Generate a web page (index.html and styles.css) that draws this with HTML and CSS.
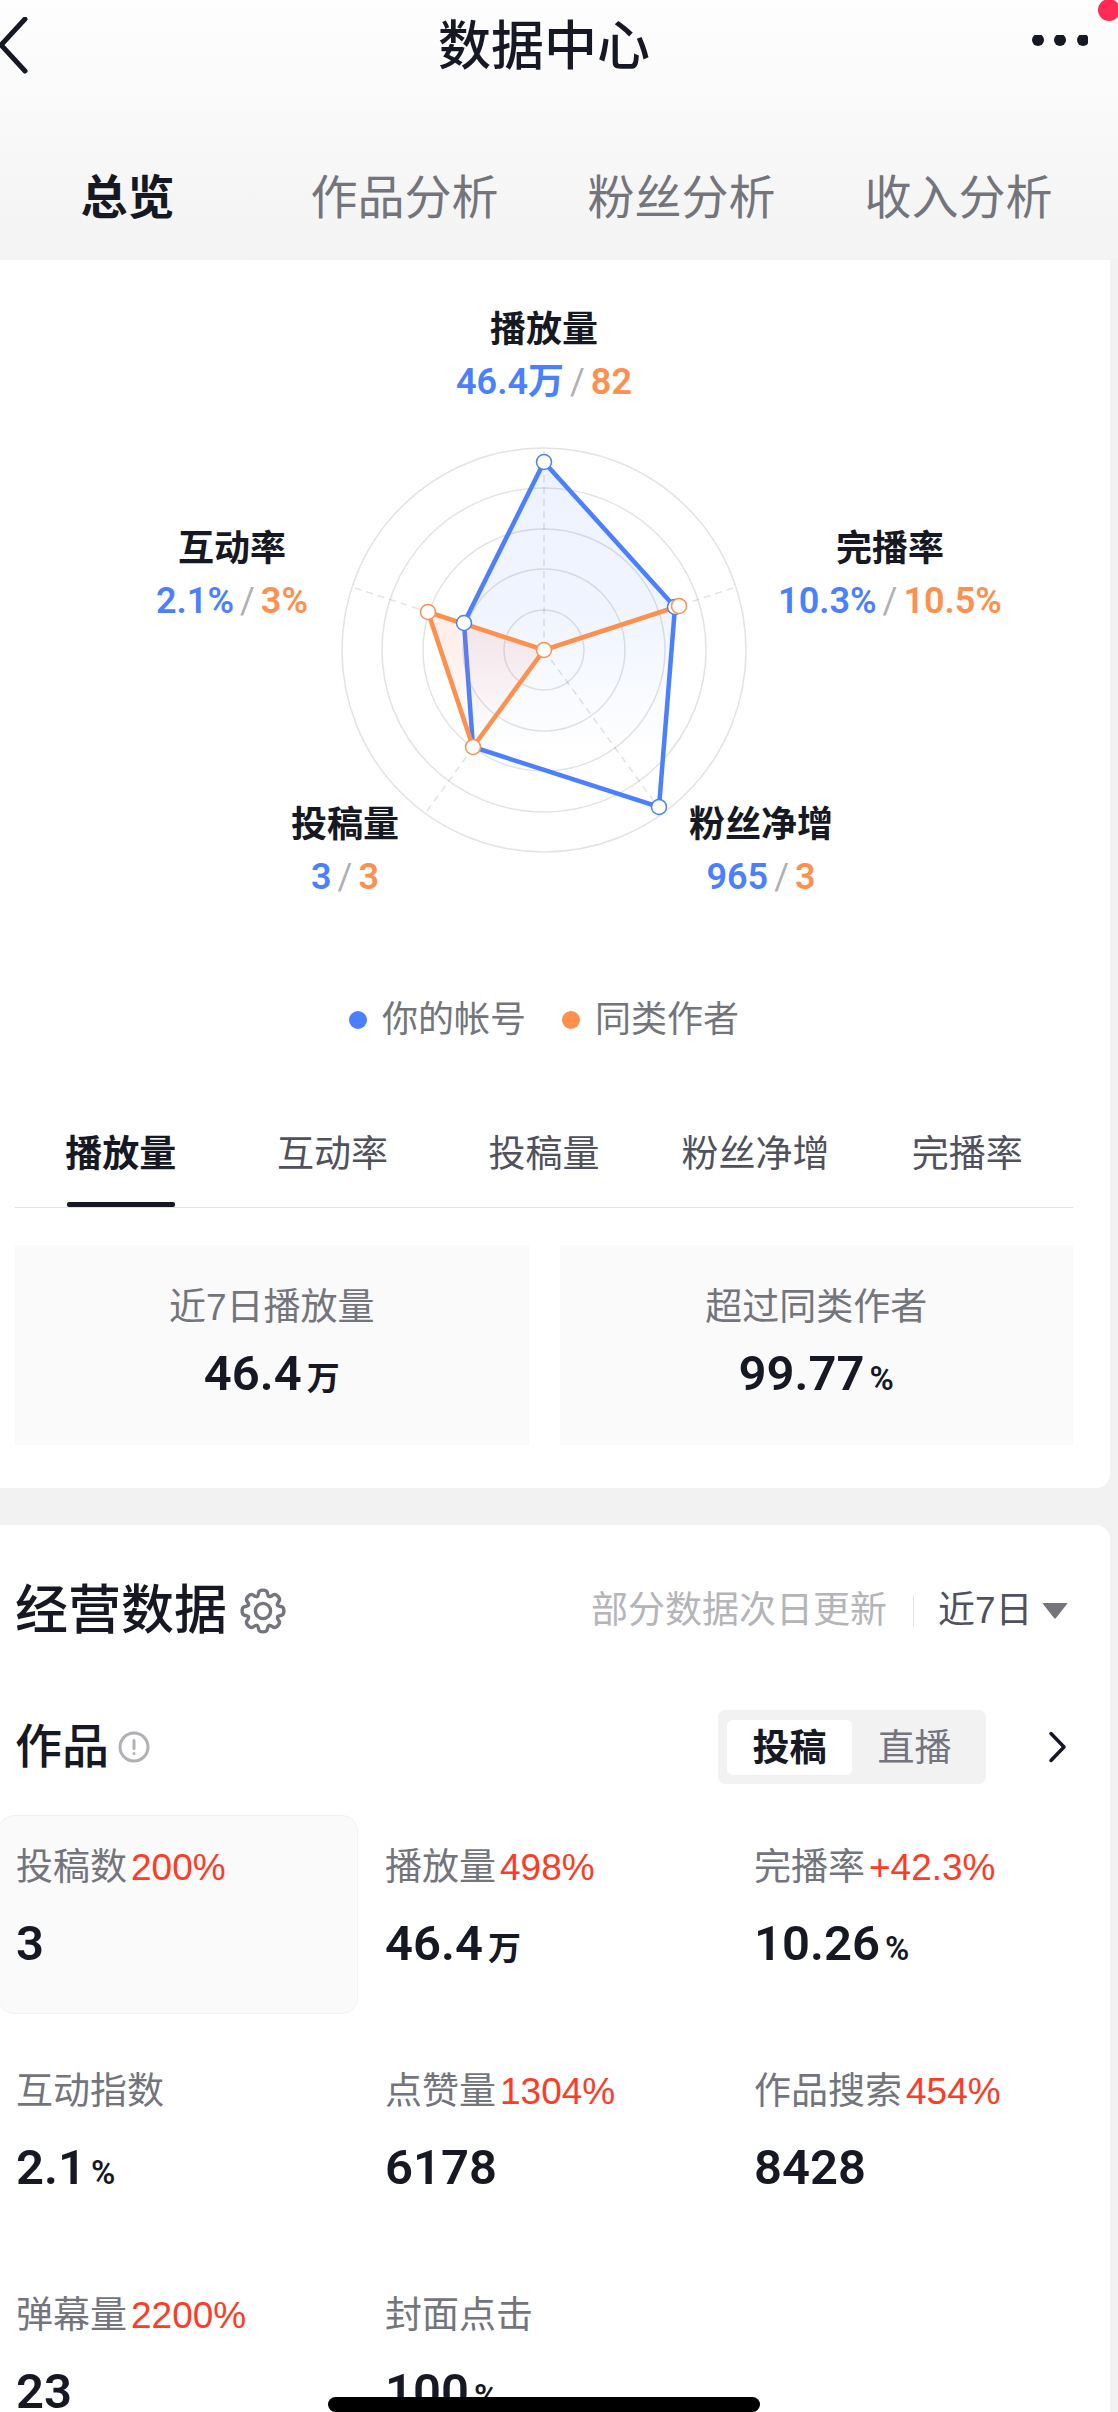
FILE: index.html
```html
<!DOCTYPE html>
<html lang="zh-CN">
<head>
  <meta charset="UTF-8"/>
  <meta name="viewport" content="width=device-width, initial-scale=1.0"/>
  <title>数据中心</title>
  <link rel="stylesheet" href="styles.css">
</head>
<body>
  <div class="page">
    <header class="header">
      <div class="topbar">
        <button class="icon-btn" type="button" aria-label="返回">
          <svg width="30" height="60" viewBox="0 0 30 60" fill="none" stroke="#161823" stroke-width="5" stroke-linecap="round" stroke-linejoin="round">
            <path d="M25 2 L1 28 L25 54"/>
          </svg>
        </button>
        <h1>数据中心</h1>
        <button class="icon-btn menu" type="button" aria-label="更多">
          <svg width="58" height="24" viewBox="0 0 58 24" fill="#161823">
            <circle cx="8" cy="5" r="6"/>
            <circle cx="30" cy="5" r="6"/>
            <circle cx="53" cy="5" r="6"/>
          </svg>
        </button>
        <span class="badge"></span>
      </div>
      <nav class="main-tabs">
        <a class="active" href="#overview">总览</a>
        <a href="#works">作品分析</a>
        <a href="#fans">粉丝分析</a>
        <a href="#income">收入分析</a>
      </nav>
    </header>

    <section class="card chart-card">
      <div class="radar">
        <svg width="780" height="600" viewBox="0 0 780 600" fill="none">
          <defs>
            <linearGradient id="blueFill" x1="0" y1="0" x2="0" y2="1">
              <stop offset="0" stop-color="#4a7fff" stop-opacity="0.1"/>
              <stop offset="0.45" stop-color="#4a7fff" stop-opacity="0.08"/>
              <stop offset="0.85" stop-color="#4a7fff" stop-opacity="0"/>
            </linearGradient>
            <linearGradient id="orangeFill" x1="0" y1="0" x2="0" y2="1">
              <stop offset="0" stop-color="#ff6b4a" stop-opacity="0.13"/>
              <stop offset="0.4" stop-color="#ff6b4a" stop-opacity="0.09"/>
              <stop offset="0.95" stop-color="#ff6b4a" stop-opacity="0"/>
            </linearGradient>
          </defs>
          <polygon points="390,160 521,305 505,505 319,445 310,321" fill="url(#blueFill)"/>
          <g stroke="#161823" stroke-opacity="0.12" stroke-width="1.5">
            <circle cx="390" cy="348" r="40"/>
            <circle cx="390" cy="348" r="81"/>
            <circle cx="390" cy="348" r="121"/>
            <circle cx="390" cy="348" r="162"/>
            <circle cx="390" cy="348" r="202"/>
            <path stroke-dasharray="7 5" d="M390 348V149M390 348L579 286M390 348L507 509M390 348L273 509M390 348L201 286"/>
          </g>
          <polygon points="390,160 521,305 505,505 319,445 310,321" stroke="#4a7fff" stroke-width="4.5"/>
          <polygon points="390,348 525,304 390,348 319,445 274,310" fill="url(#orangeFill)" stroke="#ff8f4d" stroke-width="4.5" stroke-linejoin="round"/>
          <g fill="#fff" stroke="#4a7fff" stroke-width="1.5">
            <circle cx="390" cy="160" r="7.5"/>
            <circle cx="521" cy="305" r="7.5"/>
            <circle cx="505" cy="505" r="7.5"/>
            <circle cx="310" cy="321" r="7.5"/>
          </g>
          <g fill="#fff" stroke="#ff8f4d" stroke-width="1.5">
            <circle cx="390" cy="348" r="7.5"/>
            <circle cx="525" cy="304" r="7.5"/>
            <circle cx="319" cy="445" r="7.5"/>
            <circle cx="274" cy="310" r="7.5"/>
          </g>
        </svg>
        <div class="axis axis-play">
          <h3>播放量</h3>
          <p><b class="mine">46.4万</b><i>/</i><b class="peer">82</b></p>
        </div>
        <div class="axis axis-finish">
          <h3>完播率</h3>
          <p><b class="mine">10.3%</b><i>/</i><b class="peer">10.5%</b></p>
        </div>
        <div class="axis axis-fans">
          <h3>粉丝净增</h3>
          <p><b class="mine">965</b><i>/</i><b class="peer">3</b></p>
        </div>
        <div class="axis axis-post">
          <h3>投稿量</h3>
          <p><b class="mine">3</b><i>/</i><b class="peer">3</b></p>
        </div>
        <div class="axis axis-interact">
          <h3>互动率</h3>
          <p><b class="mine">2.1%</b><i>/</i><b class="peer">3%</b></p>
        </div>
      </div>

      <div class="legend">
        <span class="legend-mine">你的帐号</span>
        <span class="legend-peer">同类作者</span>
      </div>

      <div class="sub-tabs">
        <button class="active" type="button">播放量</button>
        <button type="button">互动率</button>
        <button type="button">投稿量</button>
        <button type="button">粉丝净增</button>
        <button type="button">完播率</button>
      </div>

      <div class="summary">
        <div class="summary-box">
          <p class="label">近7日播放量</p>
          <p class="value">46.4<small>万</small></p>
        </div>
        <div class="summary-box">
          <p class="label">超过同类作者</p>
          <p class="value">99.77<small>%</small></p>
        </div>
      </div>
    </section>

    <section class="card data-card">
      <div class="data-head">
        <h2>经营数据</h2>
        <button class="icon-btn" type="button" aria-label="设置">
          <svg width="46" height="46" viewBox="-23 -23 46 46" fill="none" stroke="#73747c" stroke-width="3.4" stroke-linecap="round">
            <path id="tooth" d="M-6 -14.5C-4.6 -15.1 -4.7 -17 -4.3 -18.5C-3.6 -21.7 3.6 -21.7 4.3 -18.5C4.7 -17 4.6 -15.1 6 -14.5"/>
            <use href="#tooth" transform="rotate(45)"/>
            <use href="#tooth" transform="rotate(90)"/>
            <use href="#tooth" transform="rotate(135)"/>
            <use href="#tooth" transform="rotate(180)"/>
            <use href="#tooth" transform="rotate(225)"/>
            <use href="#tooth" transform="rotate(270)"/>
            <use href="#tooth" transform="rotate(315)"/>
            <circle r="7.6"/>
          </svg>
        </button>
        <span class="note">部分数据次日更新</span>
        <label class="range">
          <select aria-label="时间范围">
            <option>近7日</option>
          </select>
          <svg width="26" height="16" viewBox="0 0 26 16" fill="#73747c"><path d="M1 0H25Q26 0 25 1L14 15Q13 16 12 15L1 1Q0 0 1 0Z"/></svg>
        </label>
      </div>

      <div class="works-head">
        <h3>作品</h3>
        <button class="icon-btn" type="button" aria-label="说明">
          <svg width="32" height="32" viewBox="0 0 32 32" fill="none" stroke="#b0b0b5" stroke-width="3" stroke-linecap="round">
            <circle cx="16" cy="16" r="14"/>
            <path d="M16 9.500V17.500M16 22.500V22.600"/>
          </svg>
        </button>
        <div class="switch">
          <button class="active" type="button">投稿</button>
          <button type="button">直播</button>
        </div>
        <button class="icon-btn" type="button" aria-label="查看更多">
          <svg width="20" height="34" viewBox="0 0 20 34" fill="none" stroke="#161823" stroke-width="3.5" stroke-linecap="round" stroke-linejoin="round">
            <path d="M3 3.500L16 17L3 30.500"/>
          </svg>
        </button>
      </div>

      <div class="metrics">
        <div class="metric selected">
          <p class="label">投稿数<em>200%</em></p>
          <p class="value">3</p>
        </div>
        <div class="metric">
          <p class="label">播放量<em>498%</em></p>
          <p class="value">46.4<small>万</small></p>
        </div>
        <div class="metric">
          <p class="label">完播率<em>+42.3%</em></p>
          <p class="value">10.26<small>%</small></p>
        </div>
        <div class="metric">
          <p class="label">互动指数</p>
          <p class="value">2.1<small>%</small></p>
        </div>
        <div class="metric">
          <p class="label">点赞量<em>1304%</em></p>
          <p class="value">6178</p>
        </div>
        <div class="metric">
          <p class="label">作品搜索<em>454%</em></p>
          <p class="value">8428</p>
        </div>
        <div class="metric">
          <p class="label">弹幕量<em>2200%</em></p>
          <p class="value">23</p>
        </div>
        <div class="metric">
          <p class="label">封面点击</p>
          <p class="value">100<small>%</small></p>
        </div>
      </div>
    </section>
    <div class="home-bar"></div>
  </div>
</body>
</html>
```
FILE: styles.css
```css
* {
  box-sizing: border-box;
}
body {
  margin: 0;
  background-color: #f2f2f2;
  color: #161823;
  font-family: "Liberation Sans", "Noto Sans CJK SC", sans-serif;
  font-size: 37px;
}
h1, h2, h3, p {
  margin: 0;
}
button, select {
  border: none;
  padding: 0;
  background: none;
  color: inherit;
  font: inherit;
  cursor: pointer;
}
svg {
  display: block;
}
.page {
  position: relative;
  height: 100vh;
  overflow: hidden;
}

/* header */
.header {
  background: linear-gradient(#fefefe, #f3f3f3);
}
.topbar {
  position: relative;
  display: grid;
  grid-template-columns: 1fr auto 1fr;
  align-items: center;
  height: 90px;
  padding: 4px 30px 0 0;
}
.topbar h1 {
  font-size: 53px;
  font-weight: 500;
  line-height: 60px;
}
.menu {
  justify-self: end;
}
.badge {
  position: absolute;
  top: -1px;
  right: -2px;
  width: 22px;
  height: 22px;
  border-radius: 50%;
  background-color: #fe2c55;
}
.main-tabs {
  display: grid;
  grid-template-columns: repeat(4, 1fr);
  margin: 0 21px 0 -11px;
  padding-top: 46px;
}
.main-tabs a {
  color: #73747c;
  font-size: 47px;
  line-height: 124px;
  text-align: center;
  text-decoration: none;
}
.main-tabs .active {
  color: #161823;
  font-weight: bold;
}

/* cards */
.card {
  margin-right: 8px;
  background-color: #fff;
}
.chart-card {
  margin-bottom: 37px;
  padding: 42px 37px 43px 15px;
  border-radius: 0 0 14px 0;
}
.data-card {
  padding-top: 56px;
  border-radius: 0 14px 0 0;
}

/* radar chart */
.radar {
  position: relative;
  width: 780px;
  margin: 0 auto;
}
.axis {
  position: absolute;
  padding-top: 2px;
  transform: translateX(-50%);
  font-size: 36px;
  line-height: 52px;
  text-align: center;
  white-space: nowrap;
}
.axis h3 {
  font-size: 36px;
  font-weight: bold;
}
.axis p {
  display: flex;
  justify-content: center;
  gap: 6px;
  font-family: Roboto, "Noto Sans CJK SC", sans-serif;
}
.axis b {
  font-weight: 600;
}
.axis i {
  color: #b0b0b5;
  font-style: normal;
}
.axis-play {
  top: 0;
  left: 390px;
}
.axis-finish {
  top: 219px;
  left: 736px;
}
.axis-fans {
  top: 495px;
  left: 607px;
}
.axis-post {
  top: 495px;
  left: 191px;
}
.axis-interact {
  top: 219px;
  left: 78px;
}
.mine {
  color: #4a7fff;
}
.peer {
  color: #ff8f4d;
}
.legend {
  display: flex;
  justify-content: center;
  gap: 36px;
  margin-top: 98px;
  color: #73747c;
  font-size: 36px;
  line-height: 40px;
}
.legend span {
  display: flex;
  align-items: center;
  gap: 15px;
}
.legend span::before {
  content: "";
  width: 18px;
  height: 18px;
  border-radius: 50%;
}
.legend-mine::before {
  background-color: #4a7fff;
}
.legend-peer::before {
  background-color: #ff8f4d;
}

.sub-tabs {
  display: grid;
  grid-template-columns: repeat(5, 1fr);
  margin-top: 85px;
  border-bottom: 1px solid #e3e3e4;
}
.sub-tabs button {
  position: relative;
  padding-bottom: 22px;
  color: #50515c;
  line-height: 60px;
}
.sub-tabs .active {
  color: #161823;
  font-weight: bold;
}
.sub-tabs .active::after {
  content: "";
  position: absolute;
  bottom: 0;
  left: 50%;
  width: 108px;
  height: 5px;
  margin-left: -54px;
  border-radius: 2px;
  background-color: #161823;
}

.label {
  height: 44px;
  color: #73747c;
  line-height: 44px;
}
.label em {
  margin-left: 4px;
  color: #ff3b26;
  font-style: normal;
}
.value {
  height: 60px;
  font-family: Roboto, "Noto Sans CJK SC", sans-serif;
  font-size: 49px;
  font-weight: 600;
  line-height: 60px;
}
.value small {
  margin-left: 5px;
  font-size: 33px;
  line-height: 1;
}
.summary {
  display: grid;
  grid-template-columns: 1fr 1fr;
  gap: 31px;
  margin-top: 37px;
}
.summary-box {
  padding: 41px 0;
  background-color: #fafafa;
  text-align: center;
}
.summary-box .value {
  margin-top: 14px;
}

/* business data */
.data-head {
  display: flex;
  align-items: center;
  height: 60px;
  padding: 0 42px 0 15px;
}
.data-head h2 {
  margin-right: 13px;
  font-size: 53px;
  font-weight: 500;
  line-height: 60px;
}
.note {
  margin-left: auto;
  padding-right: 26px;
  color: #b4b4b9;
  line-height: 32px;
  border-right: 1px solid #e3e3e4;
}
.range {
  display: flex;
  align-items: center;
  gap: 9px;
  padding-left: 24px;
  color: #50515c;
}
.range select {
  appearance: none;
  line-height: 44px;
}
.works-head {
  display: flex;
  align-items: center;
  margin-top: 69px;
  padding: 0 42px 0 15px;
}
.works-head h3 {
  margin-right: 9px;
  font-size: 47px;
  font-weight: 500;
  line-height: 60px;
}
.switch {
  display: flex;
  margin-left: auto;
  margin-right: 62px;
  padding: 10px 9px 9px;
  border-radius: 7px;
  background-color: #f2f2f3;
}
.switch button {
  width: 125px;
  padding-top: 2px;
  border-radius: 6px;
  color: #73747c;
  line-height: 53px;
}
.switch .active {
  background-color: #fff;
  color: #161823;
  font-weight: bold;
}
.metrics {
  display: grid;
  grid-template-columns: repeat(3, 1fr);
  gap: 25px 9px;
  margin: 31px 14px 0 -2px;
}
.metric {
  padding: 30px 0 39px 17px;
  border: 1px solid transparent;
  border-radius: 16px;
}
.metric .value {
  margin-top: 24px;
}
.selected {
  border-color: #f2f2f3;
  background-color: #fafafa;
}

.home-bar {
  position: absolute;
  bottom: 0;
  left: 328px;
  right: 358px;
  height: 15px;
  border-radius: 8px;
  background-color: #000;
}
```
